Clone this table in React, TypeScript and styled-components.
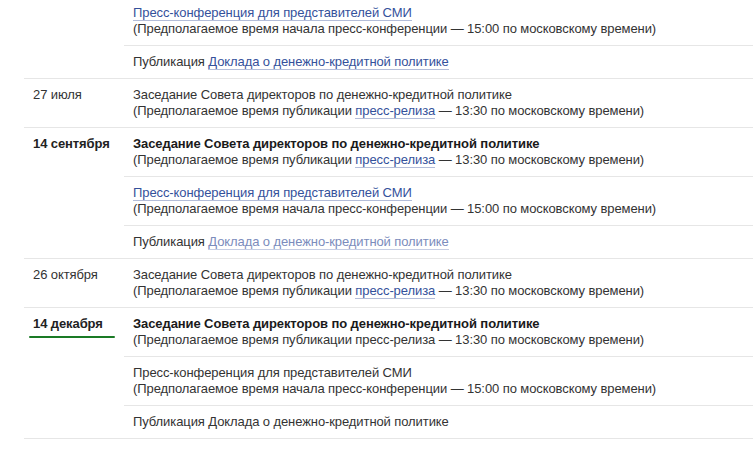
import React from "react";
import styled, { createGlobalStyle } from "styled-components";

const Global = createGlobalStyle`
  html, body { margin: 0; padding: 0; background: #fff; overflow: hidden; }
  body { font-family: "Liberation Sans", Arial, sans-serif; font-size: 13px; color: #333; letter-spacing: -0.09px; }
`;

const Schedule = styled.div`
  margin-top: -3px;
  padding-left: 24px;
`;

const Row = styled.div`
  display: flex;
  border-bottom: 1px solid #e6e6e6;
`;

const DateCell = styled.div<{ $bold?: boolean }>`
  width: 100px;
  flex: none;
  box-sizing: border-box;
  padding: 8px 9px;
  line-height: 16px;
  font-weight: ${(p) => (p.$bold ? 700 : 400)};
  color: ${(p) => (p.$bold ? "#222" : "#333")};
`;

const Marker = styled.div`
  height: 2px;
  width: 86px;
  margin: 4px 0 0 -4px;
  background: #1a7a25;
  border-radius: 1px;
`;

const Items = styled.div`
  flex: 1;
  display: flex;
  flex-direction: column;
`;

const Item = styled.div`
  padding: 8px 9px;
  line-height: 16px;
  border-bottom: 1px solid #e6e6e6;
  &:last-child { border-bottom: none; }
`;

const Title = styled.div<{ $bold?: boolean }>`
  font-weight: ${(p) => (p.$bold ? 700 : 400)};
  color: ${(p) => (p.$bold ? "#1a1a1a" : "#333")};
`;

const Note = styled.div`
  color: #333;
`;

const Link = styled.a<{ $visited?: boolean }>`
  color: ${(p) => (p.$visited ? "#7b8cbc" : "#34519b")};
  text-decoration: none;
  border-bottom: 1px solid ${(p) => (p.$visited ? "#c5cde3" : "#b3bdd9")};
  cursor: pointer;
`;

type Ev = {
  date?: string;
  bold?: boolean;
  current?: boolean;
  items: React.ReactNode[];
};

const pressNote = (link: boolean) => (
  <Note>
    (Предполагаемое время публикации {link ? <Link>пресс-релиза</Link> : "пресс-релиза"} — 13:30 по московскому времени)
  </Note>
);

const confNote = (
  <Note>(Предполагаемое время начала пресс-конференции — 15:00 по московскому времени)</Note>
);

const events: Ev[] = [
  {
    items: [
      <>
        <Title><Link>Пресс-конференция для представителей СМИ</Link></Title>
        {confNote}
      </>,
      <Title>Публикация <Link>Доклада о денежно-кредитной политике</Link></Title>,
    ],
  },
  {
    date: "27 июля",
    items: [
      <>
        <Title>Заседание Совета директоров по денежно-кредитной политике</Title>
        {pressNote(true)}
      </>,
    ],
  },
  {
    date: "14 сентября",
    bold: true,
    items: [
      <>
        <Title $bold>Заседание Совета директоров по денежно-кредитной политике</Title>
        {pressNote(true)}
      </>,
      <>
        <Title><Link>Пресс-конференция для представителей СМИ</Link></Title>
        {confNote}
      </>,
      <Title>Публикация <Link $visited>Доклада о денежно-кредитной политике</Link></Title>,
    ],
  },
  {
    date: "26 октября",
    items: [
      <>
        <Title>Заседание Совета директоров по денежно-кредитной политике</Title>
        {pressNote(true)}
      </>,
    ],
  },
  {
    date: "14 декабря",
    bold: true,
    current: true,
    items: [
      <>
        <Title $bold>Заседание Совета директоров по денежно-кредитной политике</Title>
        {pressNote(false)}
      </>,
      <>
        <Title>Пресс-конференция для представителей СМИ</Title>
        {confNote}
      </>,
      <Title>Публикация Доклада о денежно-кредитной политике</Title>,
    ],
  },
];

export default function App() {
  return (
    <>
      <Global />
      <Schedule>
        {events.map((ev, i) => (
          <Row key={i}>
            <DateCell $bold={ev.bold}>
              {ev.date}
              {ev.current && <Marker />}
            </DateCell>
            <Items>
              {ev.items.map((it, j) => (
                <Item key={j}>{it}</Item>
              ))}
            </Items>
          </Row>
        ))}
      </Schedule>
    </>
  );
}
